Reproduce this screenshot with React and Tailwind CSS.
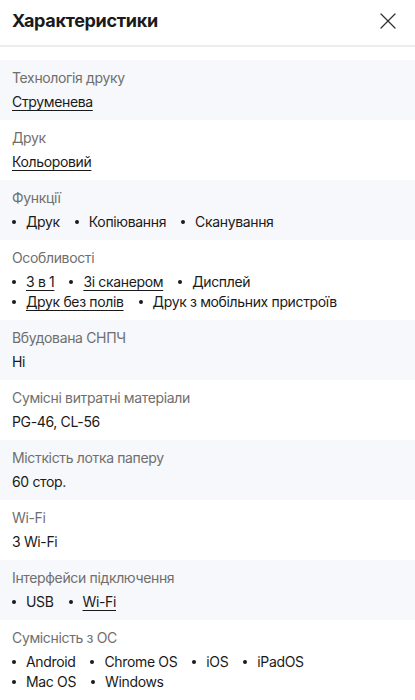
import { X } from 'lucide-react'

const rows = [
  { label: 'Технологія друку', value: [{ t: 'Струменева', link: true }] },
  { label: 'Друк', value: [{ t: 'Кольоровий', link: true }] },
  { label: 'Функції', list: [[{ t: 'Друк' }, { t: 'Копіювання' }, { t: 'Сканування' }]] },
  {
    label: 'Особливості',
    list: [
      [{ t: '3 в 1', link: true }, { t: 'Зі сканером', link: true }, { t: 'Дисплей' }],
      [{ t: 'Друк без полів', link: true }, { t: 'Друк з мобільних пристроїв' }],
    ],
  },
  { label: 'Вбудована СНПЧ', value: [{ t: 'Ні' }] },
  { label: 'Сумісні витратні матеріали', value: [{ t: 'PG-46, CL-56' }] },
  { label: 'Місткість лотка паперу', value: [{ t: '60 стор.' }] },
  { label: 'Wi-Fi', value: [{ t: '3 Wi-Fi' }] },
  { label: 'Інтерфейси підключення', list: [[{ t: 'USB' }, { t: 'Wi-Fi', link: true }]] },
  {
    label: 'Сумісність з ОС',
    list: [
      [{ t: 'Android' }, { t: 'Chrome OS' }, { t: 'iOS' }, { t: 'iPadOS' }],
      [{ t: 'Mac OS' }, { t: 'Windows' }],
    ],
  },
]

function Text({ item }) {
  return item.link ? (
    <span className="underline decoration-1 underline-offset-[3px]">{item.t}</span>
  ) : (
    <span>{item.t}</span>
  )
}

export default function App() {
  return (
    <div className="h-[700px] overflow-hidden bg-white font-['Inter',sans-serif] text-[#1a1a1a] tracking-[-0.35px]">
      <header className="flex h-[47px] items-center justify-between border-b-[2px] border-[#ececec] pb-1 pl-3 pr-[13px]">
        <h1 className="text-[18px] font-bold tracking-[-0.3px]">Характеристики</h1>
        <X size={28} strokeWidth={1.1} className="text-[#333]" />
      </header>

      <div className="mt-[13px]">
        {rows.map((r, i) => (
          <div key={r.label} className={`px-3 pb-2 pt-2 ${i % 2 === 0 ? 'bg-[#f6f8fb]' : 'bg-white'}`}>
            <div className="text-[14px] leading-5 text-[#6f6f6f]">{r.label}</div>
            {r.value && (
              <div className="mt-1 text-[14px] leading-5">
                {r.value.map((v) => (
                  <Text key={v.t} item={v} />
                ))}
              </div>
            )}
            {r.list && (
              <div className="mt-1 flex flex-col">
                {r.list.map((line, li) => (
                  <div key={li} className="flex gap-[15px] text-[14px] leading-5">
                    {line.map((v) => (
                      <div key={v.t} className="flex items-center gap-[10px]">
                        <span className="h-[4px] w-[4px] rounded-full bg-[#1a1a1a]" />
                        <Text item={v} />
                      </div>
                    ))}
                  </div>
                ))}
              </div>
            )}
          </div>
        ))}
      </div>
    </div>
  )
}
